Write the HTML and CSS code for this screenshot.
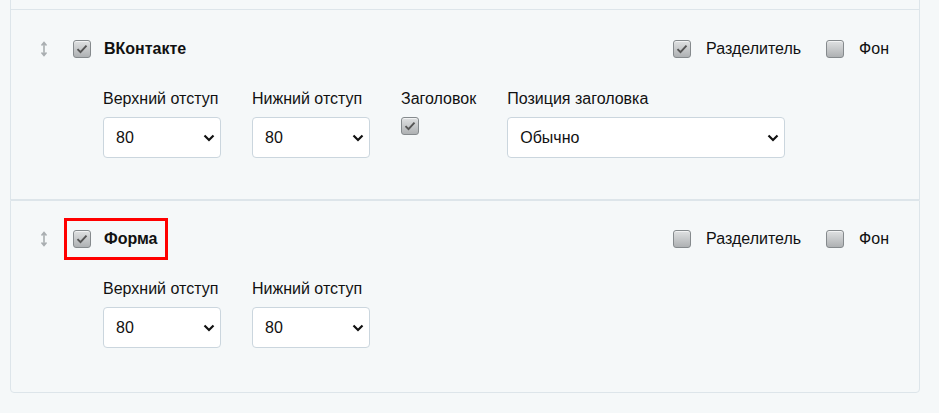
FILE: index.html
```html
<!DOCTYPE html>
<html lang="ru">
  <head>
    <meta charset="UTF-8" />
    <meta name="viewport" content="width=device-width, initial-scale=1.0" />
    <title>Блоки страницы</title>
    <link rel="stylesheet" href="styles.css">
  </head>
  <body>
    <main class="blocks">
      <!-- tail of the previous block -->
      <div class="block block-cut"></div>

      <!-- VK block -->
      <section class="block">
        <div class="block-head">
          <span class="handle">
            <svg width="8" height="16" viewBox="0 0 8 16"><path d="M4 2v12M1.5 4.5L4 1.5l2.5 3M1.5 11.5L4 14.5l2.5-3" fill="none" stroke="#a9aeb1" stroke-width="1.6"/></svg>
          </span>
          <label class="toggle">
            <span class="check is-on"><svg width="12" height="10" viewBox="0 0 12 10"><path d="M1.5 5.2l3 3 6-6.5" fill="none" stroke="#555" stroke-width="1.9"/></svg></span>
            <span class="block-title">ВКонтакте</span>
          </label>
          <div class="block-opts">
            <label class="opt">
              <span class="check is-on"><svg width="12" height="10" viewBox="0 0 12 10"><path d="M1.5 5.2l3 3 6-6.5" fill="none" stroke="#555" stroke-width="1.9"/></svg></span>
              Разделитель
            </label>
            <label class="opt">
              <span class="check"></span>
              Фон
            </label>
          </div>
        </div>
        <div class="fields">
          <div class="field">
            <span class="field-label">Верхний отступ</span>
            <div class="select">
              <span>80</span>
              <svg class="chev" width="12" height="8" viewBox="0 0 12 8"><path d="M1.5 1.5l4.5 4.5 4.5-4.5" fill="none" stroke="#111" stroke-width="2.2"/></svg>
            </div>
          </div>
          <div class="field">
            <span class="field-label">Нижний отступ</span>
            <div class="select">
              <span>80</span>
              <svg class="chev" width="12" height="8" viewBox="0 0 12 8"><path d="M1.5 1.5l4.5 4.5 4.5-4.5" fill="none" stroke="#111" stroke-width="2.2"/></svg>
            </div>
          </div>
          <div class="field">
            <span class="field-label">Заголовок</span>
            <span class="check is-on"><svg width="12" height="10" viewBox="0 0 12 10"><path d="M1.5 5.2l3 3 6-6.5" fill="none" stroke="#555" stroke-width="1.9"/></svg></span>
          </div>
          <div class="field">
            <span class="field-label">Позиция заголовка</span>
            <div class="select select-wide">
              <span>Обычно</span>
              <svg class="chev" width="12" height="8" viewBox="0 0 12 8"><path d="M1.5 1.5l4.5 4.5 4.5-4.5" fill="none" stroke="#111" stroke-width="2.2"/></svg>
            </div>
          </div>
        </div>
      </section>

      <!-- Form block -->
      <section class="block">
        <div class="block-head">
          <span class="handle">
            <svg width="8" height="16" viewBox="0 0 8 16"><path d="M4 2v12M1.5 4.5L4 1.5l2.5 3M1.5 11.5L4 14.5l2.5-3" fill="none" stroke="#a9aeb1" stroke-width="1.6"/></svg>
          </span>
          <label class="toggle marked">
            <span class="check is-on"><svg width="12" height="10" viewBox="0 0 12 10"><path d="M1.5 5.2l3 3 6-6.5" fill="none" stroke="#555" stroke-width="1.9"/></svg></span>
            <span class="block-title">Форма</span>
          </label>
          <div class="block-opts">
            <label class="opt">
              <span class="check"></span>
              Разделитель
            </label>
            <label class="opt">
              <span class="check"></span>
              Фон
            </label>
          </div>
        </div>
        <div class="fields">
          <div class="field">
            <span class="field-label">Верхний отступ</span>
            <div class="select">
              <span>80</span>
              <svg class="chev" width="12" height="8" viewBox="0 0 12 8"><path d="M1.5 1.5l4.5 4.5 4.5-4.5" fill="none" stroke="#111" stroke-width="2.2"/></svg>
            </div>
          </div>
          <div class="field">
            <span class="field-label">Нижний отступ</span>
            <div class="select">
              <span>80</span>
              <svg class="chev" width="12" height="8" viewBox="0 0 12 8"><path d="M1.5 1.5l4.5 4.5 4.5-4.5" fill="none" stroke="#111" stroke-width="2.2"/></svg>
            </div>
          </div>
        </div>
      </section>
    </main>
  </body>
</html>
```

FILE: styles.css
```css
:root {
  --bg: #f5f8f9;
  --border: #dde5ea;
  --input-border: #cbd6de;
  --text: #111111;
  --marker: #ff0000;
}

* {
  margin: 0;
  padding: 0;
  box-sizing: border-box;
}

body {
  background-color: var(--bg);
  color: var(--text);
  font-family: "Liberation Sans", Arial, sans-serif;
  font-size: 16px;
}

.blocks {
  width: 910px;
  margin-left: 10px;
}

.block {
  border: 1px solid var(--border);
  padding: 27px 30px 41px 29px;
}

.block:last-child {
  border-radius: 0 0 4px 4px;
  padding-top: 26px;
  padding-bottom: 44px;
}

.block-cut {
  height: 9px;
  padding: 0;
  border-top: none;
  border-bottom: none;
}

/* Header row */
.block-head {
  display: flex;
  align-items: center;
  height: 24px;
}

.handle {
  display: flex;
  width: 33px;
}

.toggle {
  display: flex;
  align-items: center;
  gap: 13px;
  height: 24px;
}

.toggle.marked {
  outline: 3px solid var(--marker);
  outline-offset: 6px;
  padding-right: 1px;
}

.block-title {
  font-weight: 700;
}

.block-opts {
  margin-left: auto;
  display: flex;
  align-items: center;
  gap: 25px;
}

.opt {
  display: flex;
  align-items: center;
  gap: 15px;
}

/* Checkbox */
.check {
  width: 18px;
  height: 18px;
  flex: none;
  display: flex;
  align-items: center;
  justify-content: center;
  border: 1px solid #858a8d;
  border-radius: 3px;
  background: linear-gradient(#dfe1e2, #aeb1b3);
  box-shadow: inset 0 1px 0 rgba(255, 255, 255, 0.6);
}

/* Fields */
.fields {
  display: flex;
  gap: 31px;
  margin-top: 29px;
  margin-left: 63px;
}

.field {
  display: flex;
  flex-direction: column;
  align-items: flex-start;
}

.field-label {
  line-height: 18px;
  margin-bottom: 9px;
  white-space: nowrap;
}

.select {
  position: relative;
  width: 118px;
  height: 41px;
  display: flex;
  align-items: center;
  padding-left: 12px;
  background-color: #fff;
  border: 1px solid var(--input-border);
  border-radius: 4px;
}

.select-wide {
  width: 278px;
}

.chev {
  position: absolute;
  right: 5px;
  top: 16px;
}
```
